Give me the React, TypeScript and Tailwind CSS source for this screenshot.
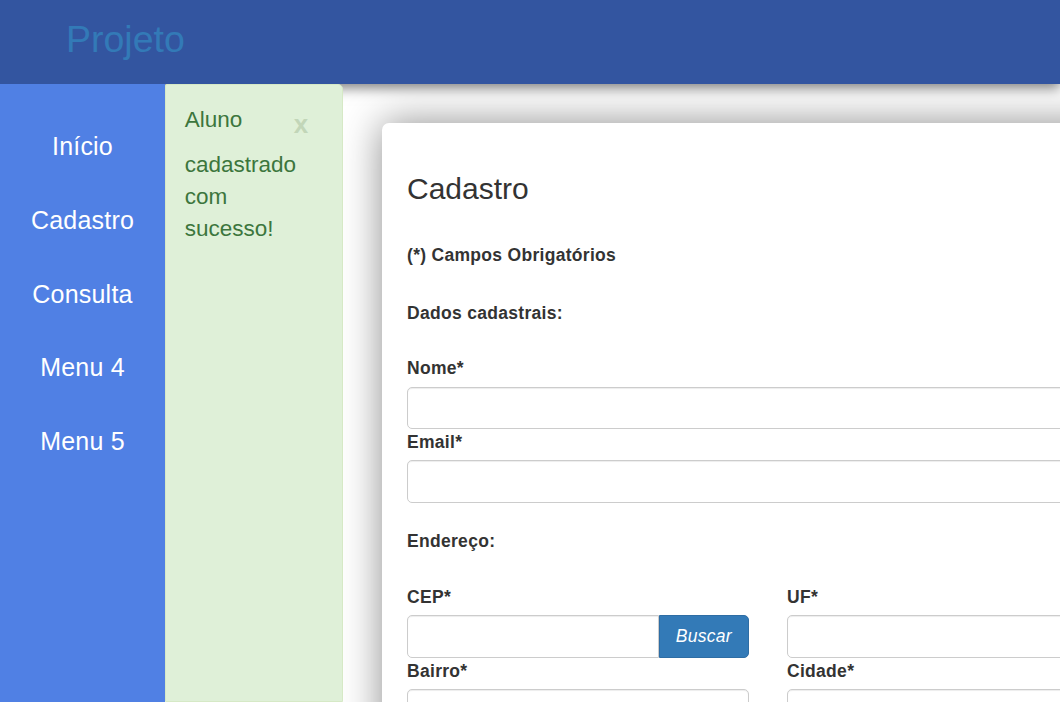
import React from "react";

const menu = ["Início", "Cadastro", "Consulta", "Menu 4", "Menu 5"];

const Label = ({ children }: { children: React.ReactNode }) => (
  <label className="block text-[17.5px] leading-[23px] pt-[2px] font-bold tracking-[0.3px] text-[#333] mb-[6.25px]">
    {children}
  </label>
);

const Input = ({ className = "" }: { className?: string }) => (
  <input
    type="text"
    className={`block h-[42.5px] w-full border border-[#ccc] rounded-[5px] bg-white shadow-[inset_0_1px_1px_rgba(0,0,0,0.075)] px-[15px] text-[17.5px] outline-none ${className}`}
  />
);

export default function App() {
  return (
    <div className="h-[702px] w-[1060px] overflow-hidden flex flex-col bg-white font-['Liberation_Sans',Arial,sans-serif]">
      <header className="relative z-10 h-[84px] shrink-0 bg-[#3355a0] pl-[66px] pt-[20.5px] shadow-[0_4px_12px_rgba(0,0,0,0.5)]">
        <span className="text-[37.5px] leading-none text-[#337ab7]">Projeto</span>
      </header>

      <div className="flex flex-1 min-h-0">
        <nav className="relative z-20 w-[165px] shrink-0 bg-[#5080e4] pt-[26px]">
          {menu.map((item) => (
            <div
              key={item}
              className="h-[73.75px] flex items-center justify-center text-white text-[25px] tracking-[0.2px]"
            >
              {item}
            </div>
          ))}
        </nav>

        <div className="relative z-20 w-[178px] shrink-0 bg-[#dff0d8] border border-[#d6e9c6] rounded-tr-[5px] rounded-tl-[2px] px-[18.75px] pt-[18.75px] text-[#3c763d] text-[22.5px] leading-[32.1px]">
          <div className="flex items-start">
            <span>Aluno</span>
            <span className="ml-auto mr-[15px] mt-[7.5px] text-[26px] leading-none font-bold text-[#c2d6b8]">
              x
            </span>
          </div>
          <div className="mt-[12px]">
            cadastrado
            <br />
            com
            <br />
            sucesso!
          </div>
        </div>

        <main className="flex-1 min-w-0 overflow-hidden pl-[39px] pt-[39px]">
          <div className="w-[772px] min-h-[700px] bg-white rounded-tl-[7px] shadow-[0_0_40px_rgba(0,0,0,0.45)] px-[25px] pt-[49px] text-[#333]">
            <h3 className="text-[30px] leading-[33px]">Cadastro</h3>
            <p className="mt-[37px] pt-[2px] text-[17.5px] leading-[23px] font-bold tracking-[0.3px]">
              (*) Campos Obrigatórios
            </p>
            <p className="mt-[33px] pt-[2px] text-[17.5px] leading-[23px] font-bold tracking-[0.3px]">
              Dados cadastrais:
            </p>

            <div className="mt-[30.25px]">
              <Label>Nome*</Label>
              <Input />
              <Label>Email*</Label>
              <Input />
            </div>

            <p className="mt-[25.25px] pt-[2px] text-[17.5px] leading-[23px] font-bold tracking-[0.3px]">
              Endereço:
            </p>

            <div className="mt-[31px] grid grid-cols-2 gap-x-[38px]">
              <div>
                <Label>CEP*</Label>
                <div className="flex">
                  <Input className="rounded-r-none" />
                  <button className="h-[42.5px] shrink-0 px-[16px] bg-[#337ab7] border border-[#2e6da4] rounded-r-[5px] text-white italic text-[17.5px] tracking-[0.3px]">
                    Buscar
                  </button>
                </div>
                <Label>Bairro*</Label>
                <Input />
              </div>
              <div>
                <Label>UF*</Label>
                <Input />
                <Label>Cidade*</Label>
                <Input />
              </div>
            </div>
          </div>
        </main>
      </div>
    </div>
  );
}
